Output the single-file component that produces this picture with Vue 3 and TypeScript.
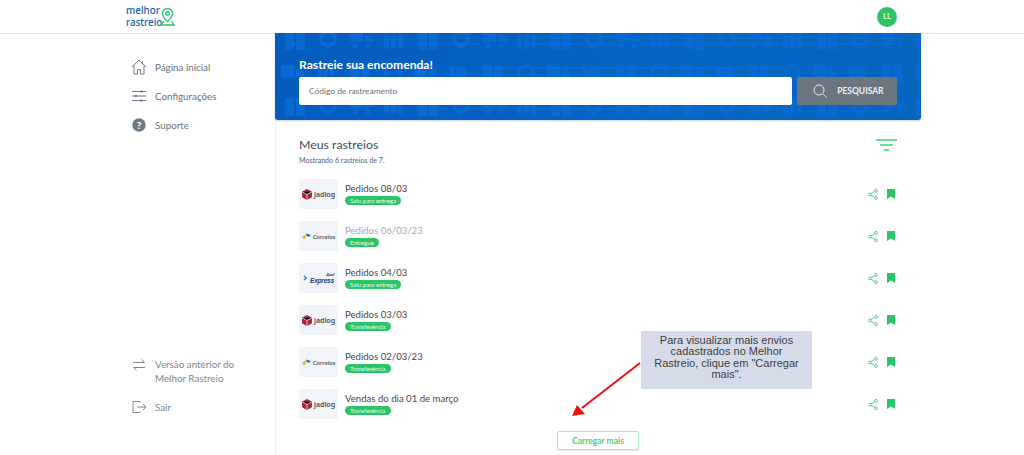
<script setup lang="ts">
interface Shipment {
  id: number
  name: string
  status: string
  carrier: 'jadlog' | 'correios' | 'azul'
  faded?: boolean
}

const shipments: Shipment[] = [
  { id: 1, name: 'Pedidos 08/03', status: 'Saiu para entrega', carrier: 'jadlog' },
  { id: 2, name: 'Pedidos 06/03/23', status: 'Entregue', carrier: 'correios', faded: true },
  { id: 3, name: 'Pedidos 04/03', status: 'Saiu para entrega', carrier: 'azul' },
  { id: 4, name: 'Pedidos 03/03', status: 'Transferência', carrier: 'jadlog' },
  { id: 5, name: 'Pedidos 02/03/23', status: 'Transferência', carrier: 'correios' },
  { id: 6, name: 'Vendas do dia 01 de março', status: 'Transferência', carrier: 'jadlog' },
]
</script>

<template>
  <div class="page">
    <header class="topbar">
      <div class="brand">
        <div class="brand-text">
          <span>melhor</span>
          <span>rastreio</span>
        </div>
        <svg class="brand-pin" width="15" height="20" viewBox="0 0 16 20" fill="none" stroke="#2fc46f" stroke-width="1.400">
          <path d="M8 15C5 11.500 2.600 9.500 2.600 6.300a5.400 5.400 0 0 1 10.800 0C13.400 9.500 11 11.500 8 15z" />
          <circle cx="8" cy="6.300" r="1.900" />
          <path d="M4 14.500L1 18.500h14l-2.500-4" />
        </svg>
      </div>
      <div class="avatar">LL</div>
    </header>

    <div class="body">
      <aside class="sidebar">
        <nav class="nav">
          <a class="nav-item">
            <svg width="16" height="16" viewBox="0 0 16 16" fill="none" stroke="#6c7a86" stroke-width="1">
              <path d="M.8 8L8 1.200 15.200 8M3 6.500V15h3.500v-4.500h3V15H13V6.500M11.500 2.500v2" />
            </svg>
            <span>Página inicial</span>
          </a>
          <a class="nav-item">
            <svg width="16" height="16" viewBox="0 0 16 16" fill="none" stroke="#6c7a86" stroke-width="1">
              <path d="M1 3.500h14M1 8h14M1 12.500h14" />
              <path stroke-width="2" d="M10.500 2.500v2M5 7v2M10 11.500v2" />
            </svg>
            <span>Configurações</span>
          </a>
          <a class="nav-item">
            <svg width="16" height="16" viewBox="0 0 16 16">
              <circle cx="8" cy="8" r="6.700" fill="#6c7a86" />
              <text x="8" y="11.600" text-anchor="middle" class="help-mark">?</text>
            </svg>
            <span>Suporte</span>
          </a>
        </nav>
        <nav class="nav nav-bottom">
          <a class="nav-item nav-tall">
            <svg width="16" height="16" viewBox="0 0 16 16" fill="none" stroke="#7b8791" stroke-width="1">
              <path d="M2 5.500h11.500M10.500 2.500l3 3M14 10.500H2.500M5.500 13.500l-3-3" />
            </svg>
            <span>Versão anterior do<br />Melhor Rastreio</span>
          </a>
          <a class="nav-item">
            <svg width="16" height="16" viewBox="0 0 16 16" fill="none" stroke="#7b8791" stroke-width="1">
              <path d="M9 3.500V2.500H2v11h7v-1M6 8h9M12 5l3 3-3 3" />
            </svg>
            <span>Sair</span>
          </a>
        </nav>
      </aside>

      <main class="main">
        <section class="banner">
          <svg class="banner-pattern" width="100%" height="100%" aria-hidden="true">
            <defs>
              <pattern id="parcels" width="133" height="66" patternUnits="userSpaceOnUse" x="0" y="-3">
                <g fill="#0869d3">
                  <!-- top row: box, pin, truck, map -->
                  <path d="M10 2h9v18h-9zM21 2h9v18h-9z" />
                  <path d="M53 0a9 9 0 0 1 9 9c0 5-5 7-9 11-4-4-9-6-9-11a9 9 0 0 1 9-9zm0 4a5 5 0 1 0 0 10 5 5 0 0 0 0-10z" />
                  <path d="M75 3h13v9H75zM90 6h6l3 3v3h-9z" />
                  <circle cx="80" cy="16" r="2.500" />
                  <circle cx="93" cy="16" r="2.500" />
                  <path d="M109 3l5 3v14l-5-3zM116 6l5-3v14l-5 3zM123 3l5 3v14l-5-3z" />
                  <!-- second row: truck, map, box, ring -->
                  <path d="M6 35h13v12H6zM21 39h5l3 3v5h-8z" />
                  <path d="M42 36l5 3v16l-5-3zM48 39l5-3v16l-5 3zM54 36l5 3v16l-5-3z" />
                  <path d="M75 35h9v20h-9zM86 35h9v20h-9z" />
                  <path d="M118 34a9 9 0 1 1 0 18 9 9 0 0 1 0-18zm0 3a6 6 0 1 0 0 12 6 6 0 0 0 0-12z" />
                </g>
              </pattern>
            </defs>
            <rect width="100%" height="100%" fill="url(#parcels)" />
          </svg>
          <div class="banner-inner">
            <h1>Rastreie sua encomenda!</h1>
            <div class="search">
              <div class="search-input">Código de rastreamento</div>
              <button class="search-btn" type="button">
                <svg width="14" height="14" viewBox="0 0 14 14" fill="none" stroke="#e8ecef" stroke-width="1">
                  <circle cx="6" cy="6" r="5" />
                  <path d="M9.700 9.700L13.500 13.500" />
                </svg>
                <span>PESQUISAR</span>
              </button>
            </div>
          </div>
        </section>

        <section class="list">
          <div class="list-head">
            <div>
              <h2>Meus rastreios</h2>
              <p>Mostrando 6 rastreios de 7.</p>
            </div>
            <svg class="filter" width="21" height="12" viewBox="0 0 21 12" fill="none" stroke="#3fce7c" stroke-width="1.300">
              <path d="M0 1h21M4 6h13M8 11h5" />
            </svg>
          </div>

          <div class="rows">
            <div v-for="item in shipments" :key="item.id" class="row">
              <div class="logo">
                <template v-if="item.carrier === 'jadlog'">
                  <svg width="10" height="11" viewBox="0 0 9 10"><path fill="#b02038" d="M4.500 0L9 2.500v5L4.500 10 0 7.500v-5z" /><path stroke="#f3f5f8" stroke-width=".7" d="M4.500 5v5M0 2.500l4.500 2.500L9 2.500" /></svg>
                  <span class="logo-jadlog">jadlog</span>
                </template>
                <template v-else-if="item.carrier === 'correios'">
                  <svg width="9" height="7" viewBox="0 0 9 7"><path fill="#e8b730" d="M0 4l3-2.500 1.500 2L2 6.500z" /><path fill="#2a6db5" d="M4 .500L9 2 6.500 4 4.500 2.500z" /></svg>
                  <span class="logo-correios">Correios</span>
                </template>
                <template v-else>
                  <svg width="5" height="6" viewBox="0 0 6 6" fill="none" stroke="#1d63c4" stroke-width="1.300"><path d="M1 .500L4 3 1 5.500" /></svg>
                  <span class="logo-azul"><small>Azul</small>Express</span>
                </template>
              </div>
              <div class="row-text">
                <div class="row-name" :class="{ faded: item.faded }">{{ item.name }}</div>
                <span class="tag">{{ item.status }}</span>
              </div>
              <div class="row-actions">
                <svg width="10" height="11" viewBox="0 0 10 11" fill="none" stroke="#3fce7c" stroke-width=".9">
                  <circle cx="1.900" cy="5.500" r="1.400" />
                  <circle cx="8" cy="1.800" r="1.400" />
                  <circle cx="8" cy="9.200" r="1.400" />
                  <path d="M3.100 4.700l3.700-2.200M3.100 6.300l3.700 2.200" />
                </svg>
                <svg width="8" height="10" viewBox="0 0 8 10"><path fill="#2cc565" d="M0 0h8v10L4 7.400 0 10z" /></svg>
              </div>
            </div>
          </div>

          <div class="more">
            <button class="more-btn" type="button">Carregar mais</button>
          </div>
        </section>
      </main>
    </div>

    <div class="callout">Para visualizar mais envios cadastrados no Melhor Rastreio, clique em "Carregar mais".</div>
    <svg class="arrow" width="75" height="60" viewBox="0 0 75 60">
      <path d="M69 1L11 46" stroke="#f20d0d" stroke-width="2" />
      <path d="M1 54L6 43L14 52z" fill="#f20d0d" />
    </svg>
  </div>
</template>

<style>
html,
body {
  margin: 0;
  background: #fff;
  overflow: hidden;
}
</style>

<style scoped>
.page {
  position: relative;
  width: 1024px;
  height: 455px;
  overflow: hidden;
  font-family: Lato, "Open Sans", sans-serif;
  color: #4a5560;
}

.topbar {
  display: flex;
  align-items: center;
  justify-content: space-between;
  box-sizing: border-box;
  height: 34px;
  padding: 0 127px 0 126px;
  border-bottom: 1px solid #e6e8ef;
}

.brand {
  display: flex;
  align-items: center;
}

.brand-text {
  display: flex;
  flex-direction: column;
  font-family: "Noto Sans", sans-serif;
  font-size: 9.800px;
  font-weight: 500;
  line-height: 12px;
  color: #1b5fa8;
}

.brand-pin {
  margin-left: -2px;
}

.avatar {
  display: flex;
  align-items: center;
  justify-content: center;
  width: 20px;
  height: 20px;
  border-radius: 50%;
  background: #2cc565;
  color: #e9fbef;
  font-size: 7.500px;
  font-weight: 700;
}

.body {
  display: flex;
  height: 421px;
}

.sidebar {
  display: flex;
  flex-direction: column;
  justify-content: space-between;
  box-sizing: border-box;
  width: 276px;
  padding: 24px 0 39px 131px;
  border-right: 1px solid #eef0f3;
}

.nav {
  display: flex;
  flex-direction: column;
  gap: 11px;
}

.nav-bottom {
  gap: 13px;
}

.nav-item {
  display: flex;
  align-items: center;
  gap: 8px;
  height: 18px;
  font-size: 9.800px;
  color: #67727d;
}

.nav-bottom .nav-item {
  color: #7b8791;
}

.nav-tall {
  align-items: flex-start;
  height: 28px;
  line-height: 14px;
}

.help-mark {
  font-family: Lato, sans-serif;
  font-size: 10px;
  font-weight: 900;
  fill: #fff;
}

.main {
  flex: none;
  width: 646px;
  margin-left: -1px;
}

.banner {
  position: relative;
  height: 87px;
  margin-top: -1px;
  border-radius: 0 0 3px 3px;
  overflow: hidden;
  background: linear-gradient(100deg, #045cbe, #0565c4 60%, #0566c0);
  box-shadow: 0 1px 2px rgba(0, 0, 0, 0.2);
}

.banner-pattern {
  position: absolute;
  inset: 0;
}

.banner-inner {
  position: relative;
  padding: 23px 24px 0;
}

.banner-inner h1 {
  margin: 0 0 4px;
  font-size: 12.100px;
  line-height: 17px;
  font-weight: 700;
  color: #fff;
}

.search {
  display: flex;
  gap: 5px;
}

.search-input {
  display: flex;
  align-items: center;
  box-sizing: border-box;
  width: 494px;
  height: 28px;
  padding-left: 10px;
  border-radius: 2px;
  background: #fff;
  font-size: 8.400px;
  color: #6a737c;
}

.search-btn {
  display: flex;
  align-items: center;
  gap: 10px;
  box-sizing: border-box;
  width: 100px;
  height: 28px;
  padding: 0 0 0 16px;
  border: 0;
  border-radius: 2px;
  background: #6b7680;
  font-family: Lato, sans-serif;
  font-size: 8.500px;
  font-weight: 700;
  color: #eef1f3;
}

.list {
  padding: 0 24px;
}

.list-head {
  display: flex;
  align-items: flex-start;
  justify-content: space-between;
  padding: 16px 0 13px;
}

.list-head h2 {
  margin: 0;
  font-size: 12.300px;
  line-height: 17px;
  font-weight: 400;
  color: #424d59;
}

.list-head p {
  margin: 3px 0 0;
  font-size: 7.100px;
  line-height: 10px;
  color: #59636d;
}

.filter {
  margin-top: 3px;
}

.rows {
  display: flex;
  flex-direction: column;
  gap: 12px;
}

.row {
  display: flex;
  align-items: center;
  gap: 7px;
  height: 30px;
}

.logo {
  display: flex;
  flex: none;
  align-items: center;
  justify-content: center;
  gap: 2px;
  width: 39px;
  height: 30px;
  border-radius: 2px;
  background: #f1f4f8;
}

.logo-jadlog {
  font-family: "Noto Sans", sans-serif;
  font-size: 7px;
  font-weight: 600;
  color: #4a4f55;
}

.logo-correios {
  font-size: 6px;
  font-weight: 700;
  color: #5b6168;
}

.logo-azul {
  display: flex;
  flex-direction: column;
  align-items: flex-end;
  font-family: "Liberation Sans", sans-serif;
  font-size: 6.500px;
  line-height: 7px;
  font-style: italic;
  font-weight: 700;
  color: #1a3f7c;
  letter-spacing: -0.2px;
}

.logo-azul small {
  font-size: 4px;
  line-height: 4px;
}

.row-text {
  flex: 1;
  min-width: 0;
  padding-bottom: 2px;
}

.row-name {
  font-size: 9.600px;
  line-height: 14px;
  color: #3f4857;
}

.row-name.faded {
  color: #a4abb5;
}

.tag {
  display: block;
  width: fit-content;
  padding: 0 5px;
  border-radius: 5px;
  background: #2cc565;
  color: #e7faee;
  font-size: 6.100px;
  line-height: 9px;
}

.row-actions {
  display: flex;
  align-items: center;
  gap: 9px;
  padding-right: 2px;
}

.more {
  display: flex;
  justify-content: center;
  padding-top: 12px;
}

.more-btn {
  width: 82px;
  height: 19px;
  padding: 0;
  border: 1px solid #a9e8c2;
  border-radius: 2px;
  background: #fff;
  box-shadow: 0 1px 2px rgba(0, 0, 0, 0.12);
  font-family: Lato, sans-serif;
  font-size: 8.500px;
  font-weight: 700;
  color: #4dd07f;
}

.callout {
  position: absolute;
  top: 331px;
  left: 641px;
  box-sizing: border-box;
  width: 171px;
  height: 58px;
  padding: 4px 10px;
  background: #d6dbe9;
  font-family: "Liberation Sans", Arial, sans-serif;
  font-size: 11px;
  line-height: 11.300px;
  text-align: center;
  color: #3f3f3f;
}

.arrow {
  position: absolute;
  top: 362px;
  left: 571px;
}
</style>
